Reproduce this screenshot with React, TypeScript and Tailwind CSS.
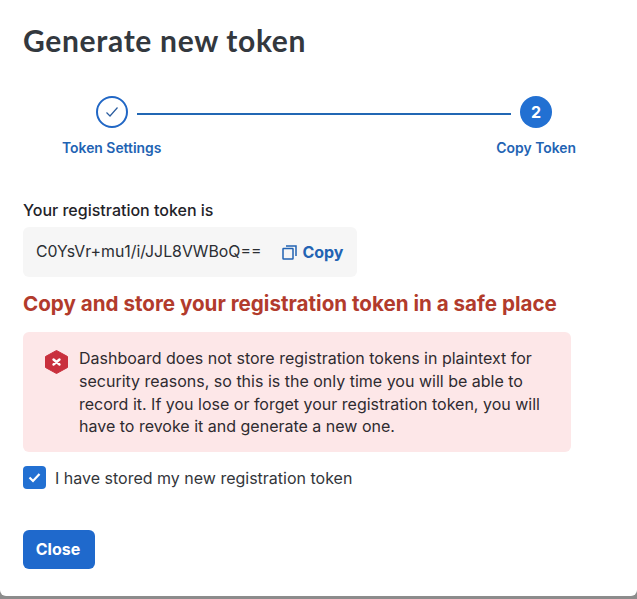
import React from "react";

const inter = { fontFamily: "Inter, sans-serif" };

const App = () => {
  return (
    <div className="h-[599px] w-[637px] overflow-hidden bg-[#8c8c8c]" style={inter}>
      <div className="h-[596px] rounded-b-[6px] bg-white pl-[23px] pt-[20px]">
        <h1 className="font-['Lato',sans-serif] text-[30px] font-bold leading-[40px] tracking-[0.68px] text-[#33383e]">Generate new token</h1>

        {/* STEPPER */}
        <div className="mt-[36px] ml-[73px] flex w-[456px] items-center">
          <div className="flex size-[32px] items-center justify-center rounded-full border-2 border-[#2167c5]">
            <svg width="14" height="12" viewBox="0 0 14 12" fill="none" stroke="#2b5d9f" strokeWidth="1.2">
              <path d="M1.5 6.5 L5 10 L12.5 1.5" />
            </svg>
          </div>
          <div className="mx-[9px] mt-[4px] h-[2px] grow bg-[#2167b4]" />
          <div className="flex size-[32px] items-center justify-center rounded-full bg-[#2270d2] text-[16px] font-bold text-white">2</div>
        </div>
        <div className="mt-[10px] ml-[39px] flex w-[514px] justify-between text-[13.9px] font-semibold leading-[20px] text-[#2263b3]">
          <span>Token Settings</span>
          <span>Copy Token</span>
        </div>

        {/* TOKEN */}
        <div className="mt-[42px] text-[16px] font-medium leading-[20px] text-[#1f2329]">Your registration token is</div>
        <div className="mt-[7px] flex h-[50px] w-[334px] items-center rounded-[6px] bg-[#f6f6f6] pl-[13px]">
          <span className="text-[15.85px] leading-[20px] text-[#2b2e33]">C0YsVr+mu1/i/JJL8VWBoQ==</span>
          <svg className="ml-[21px]" width="15" height="15" viewBox="0 0 15 15" fill="none" stroke="#2263b3" strokeWidth="1.5">
            <rect x="1" y="3.5" width="10" height="10.5" rx="0.5" />
            <path d="M4 1 H14 V11" />
          </svg>
          <span className="ml-[5px] text-[16px] font-bold leading-[20px] text-[#2263b3]">Copy</span>
        </div>

        <h2 className="mt-[11px] text-[20.6px] font-bold leading-[32px] text-[#b23b2c]">Copy and store your registration token in a safe place</h2>

        {/* ALERT */}
        <div className="mt-[12px] flex h-[120px] w-[548px] rounded-[6px] bg-[#fde7e8] pl-[22px] pt-[15px]">
          <svg className="mt-[3px] shrink-0" width="23" height="24" viewBox="0 0 23 24">
            <path d="M11.5 0.5 L22.5 6.5 V17.5 L11.5 23.5 L0.5 17.5 V6.5 Z" fill="#c9303d" stroke="#c9303d" strokeLinejoin="round" />
            <path d="M8.5 9.5 L14.5 14.5 M14.5 9.5 L8.5 14.5" stroke="#ffffff" strokeWidth="2.4" strokeLinecap="round" />
          </svg>
          <p className="ml-[11px] w-[470px] text-[16px] leading-[22.8px] text-[#2f2b30]">
            Dashboard does not store registration tokens in plaintext for security reasons, so this is the only time you will be able to record it. If you lose or forget your registration token, you will have to revoke it and generate a new one.
          </p>
        </div>

        <label className="mt-[14px] flex items-center">
          <span className="flex size-[23px] items-center justify-center rounded-[4px] bg-[#2270d2]">
            <svg width="13" height="11" viewBox="0 0 13 11" fill="none" stroke="#ffffff" strokeWidth="2.2">
              <path d="M1.5 5.5 L5 9 L11.5 2" />
            </svg>
          </span>
          <span className="ml-[9px] text-[16px] leading-[22px] text-[#33363b]">I have stored my new registration token</span>
        </label>

        <button className="mt-[41px] h-[39px] w-[72px] rounded-[6px] bg-[#1f69cc] pb-[2px] pr-[2px] text-[16px] font-bold text-white">Close</button>
      </div>
    </div>
  );
};

export default App;
